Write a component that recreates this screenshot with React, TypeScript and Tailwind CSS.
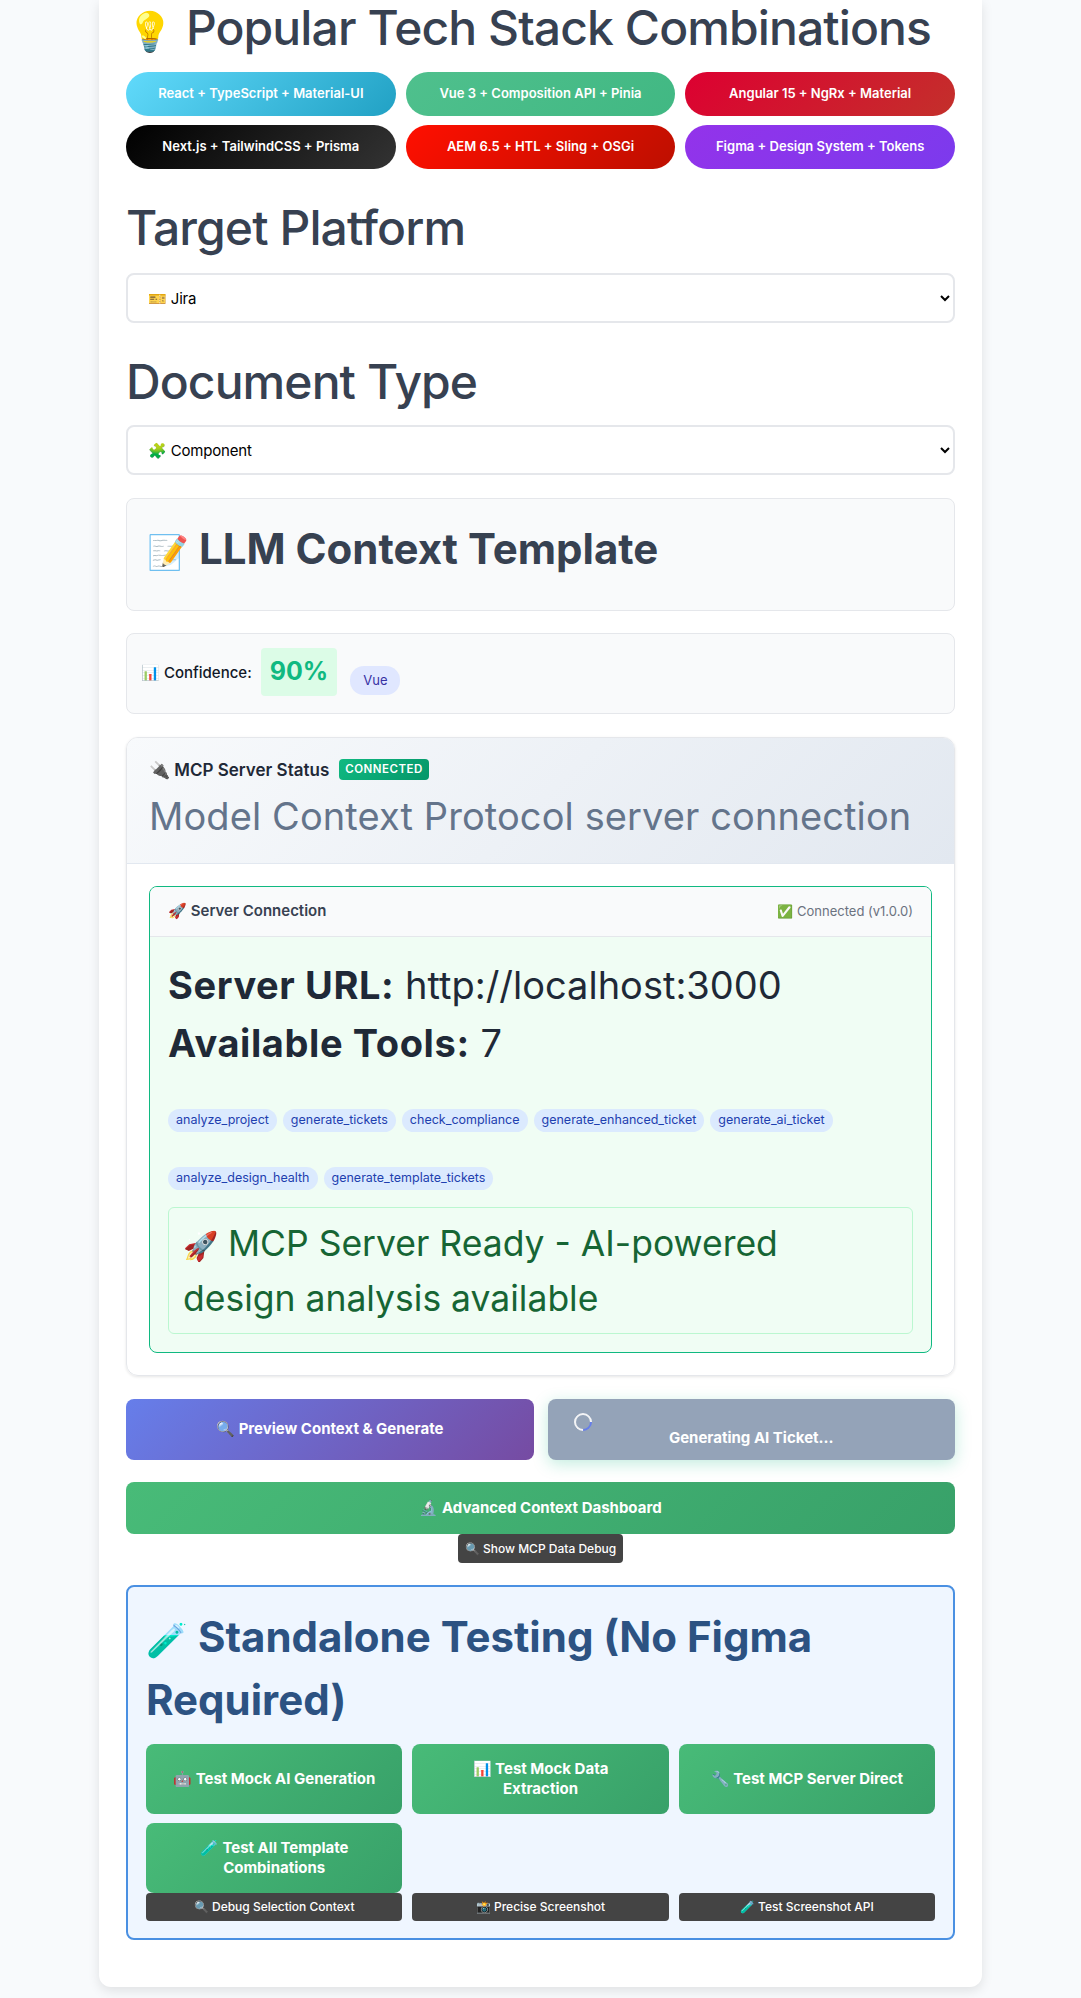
import React from 'react';

const stacks = [
  { label: 'React + TypeScript + Material-UI', cls: 'bg-[linear-gradient(135deg,#61dafb,#21a1c4)]' },
  { label: 'Vue 3 + Composition API + Pinia', cls: 'bg-[linear-gradient(135deg,#4fc08d,#41b883)]' },
  { label: 'Angular 15 + NgRx + Material', cls: 'bg-[linear-gradient(135deg,#dd0031,#c3302b)]' },
  { label: 'Next.js + TailwindCSS + Prisma', cls: 'bg-[linear-gradient(135deg,#000000,#333333)]' },
  { label: 'AEM 6.5 + HTL + Sling + OSGi', cls: 'bg-[linear-gradient(135deg,#ff0f00,#bd0f00)]' },
  { label: 'Figma + Design System + Tokens', cls: 'bg-[linear-gradient(135deg,#9333ea,#7c3aed)]' },
];

const tools = [
  'analyze_project',
  'generate_tickets',
  'check_compliance',
  'generate_enhanced_ticket',
  'generate_ai_ticket',
  'analyze_design_health',
  'generate_template_tickets',
];

const greenBtn = 'bg-[linear-gradient(135deg,#48bb78,#38a169)] text-white font-bold rounded-[8px]';
const testBtn = `${greenBtn} text-[15px] leading-[20px] h-[70px] flex items-center justify-center text-center px-[14px]`;
const darkBtn = 'bg-[#444444] text-white font-medium text-[12px] rounded-[4px] flex items-center justify-center whitespace-pre';
const h2Cls = 'text-[48px] font-medium tracking-[-0.9px] whitespace-nowrap';

// emoji font here is wider than the one in the design, scale it down in big headings
const E = ({ c }: { c: string }) => <span className="text-[0.8em] leading-none tracking-normal">{c}</span>;

function FieldSelect({ options }: { options: string[] }) {
  return (
    <select className="w-full h-[50px] px-[16px] bg-white border-2 border-[#e5e7eb] rounded-[8px] text-[15px] tracking-[-0.2px] text-black appearance-auto">
      {options.map((o) => (
        <option key={o}>{o}</option>
      ))}
    </select>
  );
}

export default function App() {
  return (
    <div className="h-[1998px] overflow-hidden bg-[#f8fafc] [font-family:Inter,'Noto_Sans',sans-serif] text-[#374151]">
      <div className="w-[883px] ml-[99px] bg-white rounded-b-[12px] shadow-[0_4px_12px_rgba(0,0,0,0.1)] px-[27px] pb-[47px]">
        <h2 className={`${h2Cls} leading-[56px]`}><E c="💡" /> Popular Tech Stack Combinations</h2>

        <div className="grid grid-cols-3 gap-x-[10px] gap-y-[9px] mt-[16px]">
          {stacks.map((s) => (
            <div
              key={s.label}
              className={`h-[44px] rounded-[22px] ${s.cls} text-white text-[13px] font-semibold flex items-center justify-center`}
            >
              {s.label}
            </div>
          ))}
        </div>

        <h2 className={`${h2Cls} leading-[64px] mt-[27px]`}>Target Platform</h2>
        <div className="mt-[13px]">
          <FieldSelect options={['🎫 Jira', '📋 Linear', '🐙 GitHub']} />
        </div>

        <h2 className={`${h2Cls} leading-[64px] mt-[27px]`}>Document Type</h2>
        <div className="mt-[11px]">
          <FieldSelect options={['🧩 Component', '📄 Page', '🔄 Flow']} />
        </div>

        <div className="h-[113px] mt-[23px] bg-[#f9fafb] border border-[#e5e7eb] rounded-[8px] px-[20px] pt-[22px]">
          <h3 className="text-[42px] leading-[56px] font-bold"><E c="📝" /> LLM Context Template</h3>
        </div>

        <div className="h-[81px] mt-[22px] bg-[#f9fafb] border border-[#e5e7eb] rounded-[8px] px-[14px] flex items-center">
          <span className="text-[15px] font-medium text-[#111827]">📊 Confidence:</span>
          <span className="ml-[9px] px-[9px] h-[48px] bg-[#dcfce7] text-[#10b981] rounded-[4px] text-[25px] font-bold flex items-center -mt-[3px]">90%</span>
          <span className="ml-[13px] px-[13px] h-[29px] bg-[#e0e7ff] text-[#3730a3] rounded-[14px] text-[13px] flex items-center mt-[14px]">Vue</span>
        </div>

        <div className="mt-[23px] border border-[#e5e7eb] rounded-[12px] shadow-[0_1px_3px_rgba(0,0,0,0.1)] overflow-hidden">
          <div className="h-[126px] bg-[linear-gradient(135deg,#f8fafc,#e2e8f0)] border-b border-[#e2e8f0] px-[22px] pt-[19px]">
            <div className="flex items-center gap-[10px] h-[28px]">
              <span className="text-[17px] font-semibold text-[#1f2937]">🔌 MCP Server Status</span>
              <span className="px-[6px] h-[21px] bg-[linear-gradient(135deg,#10b981,#059669)] text-white rounded-[4px] text-[11.5px] font-semibold tracking-[0.5px] flex items-center -mt-[3px]">CONNECTED</span>
            </div>
            <div className="text-[38px] leading-[63px] tracking-[0.1px] text-[#64748b] whitespace-nowrap">Model Context Protocol server connection</div>
          </div>
          <div className="p-[22px]">
            <div className="border border-[#10b981] rounded-[8px] bg-[#f0fdf4] overflow-hidden">
              <div className="h-[50px] bg-[#f9fafb] border-b border-[#e5e7eb] px-[18px] flex items-center justify-between">
                <span className="text-[15px] font-semibold text-[#374151]">🚀 Server Connection</span>
                <span className="text-[13px] text-[#6b7280]">✅ Connected (v1.0.0)</span>
              </div>
              <div className="px-[18px] pt-[19px] pb-[18px]">
                <div className="text-[38px] leading-[58px] text-[#1f2937]"><b className="tracking-[0.6px]">Server URL:</b> http://localhost:3000</div>
                <div className="text-[38px] leading-[58px] text-[#1f2937]"><b className="tracking-[0.6px]">Available Tools:</b> 7</div>
                <div className="flex flex-wrap gap-x-[6px] gap-y-[35px] mt-[37px]">
                  {tools.map((t) => (
                    <span key={t} className="h-[23px] px-[8px] rounded-[12px] bg-[#dbeafe] text-[#1e40af] text-[12.5px] flex items-center">{t}</span>
                  ))}
                </div>
                <div className="mt-[17px] h-[127px] border border-[#bbf7d0] rounded-[6px] bg-[#f0fdf4] px-[14px] pt-[8px] text-[35.5px] leading-[55px] text-[#166534]">
                  <E c="🚀" /> MCP Server Ready - AI-powered design analysis available
                </div>
              </div>
            </div>
          </div>
        </div>

        <div className="grid grid-cols-2 gap-[14px] mt-[23px]">
          <div className="h-[61px] rounded-[8px] bg-[linear-gradient(135deg,#667eea,#764ba2)] text-white text-[15px] font-bold flex items-center justify-center">🔍 Preview Context &amp; Generate</div>
          <div className="h-[61px] rounded-[8px] bg-[#94a3b8] text-white text-[15px] font-bold shadow-[0_4px_16px_rgba(16,185,129,0.25)] relative flex items-end justify-center pb-[11px]">
            <span className="absolute left-[26px] top-[14px] w-[18px] h-[18px] rounded-full border-2 border-[#f3f4f6] border-b-[#667eea] -rotate-45" />
            Generating AI Ticket...
          </div>
        </div>

        <div className={`h-[52px] mt-[22px] flex items-center justify-center text-[15px] ${greenBtn}`}>🔬 Advanced Context Dashboard</div>
        <div className="flex justify-center">
          <div className={`${darkBtn} w-[165px] h-[29px]`}>🔍 Show MCP Data Debug</div>
        </div>

        <div className="mt-[22px] h-[355px] border-2 border-[#4a90e2] rounded-[8px] bg-[#eff6ff] px-[18px] pt-[18px]">
          <h3 className="text-[42px] leading-[63px] font-bold text-[#2c5282]"><E c="🧪" /> Standalone Testing (No Figma Required)</h3>
          <div className="grid grid-cols-3 gap-x-[10px] gap-y-[9px] mt-[13px]">
            <div className={testBtn}><span>🤖 Test Mock AI Generation</span></div>
            <div className={testBtn}><span>📊 Test Mock Data<br />Extraction</span></div>
            <div className={testBtn}><span>🔧 Test MCP Server Direct</span></div>
            <div className={testBtn}><span>🧪 Test All Template<br />Combinations</span></div>
          </div>
          <div className="grid grid-cols-3 gap-x-[10px]">
            <div className={`${darkBtn} h-[28px]`}>🔍 Debug Selection Context</div>
            <div className={`${darkBtn} h-[28px]`}>📸 Precise Screenshot</div>
            <div className={`${darkBtn} h-[28px]`}>🧪 Test Screenshot API</div>
          </div>
        </div>
      </div>
    </div>
  );
}
